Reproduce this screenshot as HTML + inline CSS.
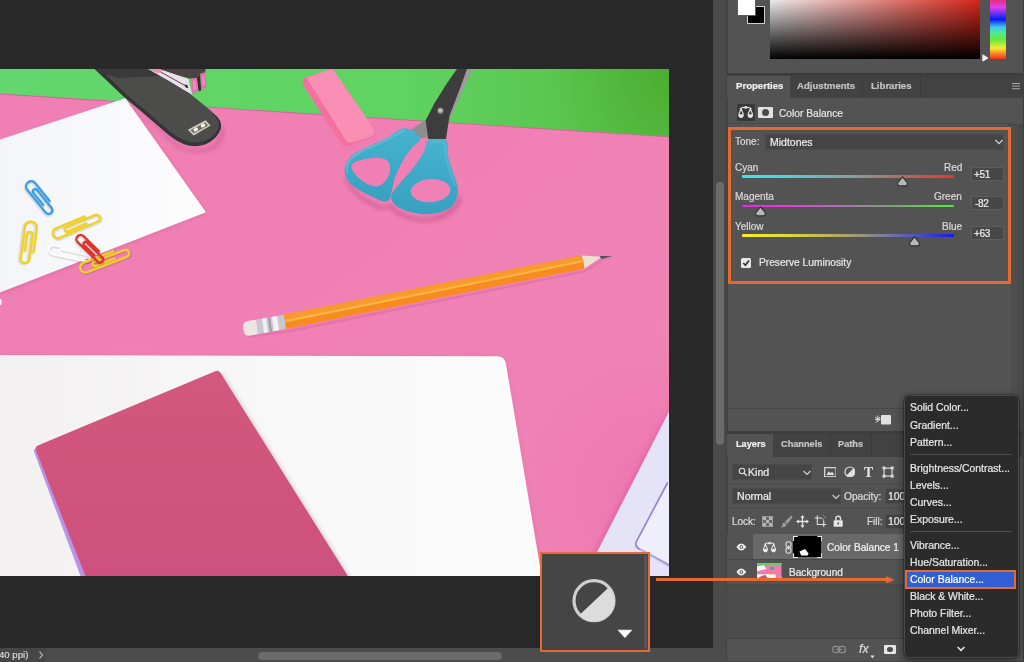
<!DOCTYPE html>
<html lang="en">
<head>
<meta charset="utf-8">
<title>Color Balance</title>
<style>
*{box-sizing:border-box;margin:0;padding:0}
html,body{width:1024px;height:662px;overflow:hidden;background:#282828}
body{position:relative;font-family:"Liberation Sans",sans-serif;font-size:10px;color:#dedede;-webkit-font-smoothing:antialiased;-webkit-text-stroke:.22px currentColor}
.abs{position:absolute}
.t{position:absolute;white-space:nowrap;line-height:12px;height:12px;will-change:transform}
.b{font-weight:700;font-size:9.6px}
/* canvas */
#photo{left:0;top:69px;width:669px;height:507px}
#status{left:0;top:648px;width:713px;height:14px;background:#4c4c4c}
#vtrack{left:713px;top:0;width:14px;height:648px;background:#4a4a4a}
/* right panel */
#panel{left:728px;top:0;width:297px;height:662px;background:#535353}
.dark{background:#424242}
.field{background:#454545;border:1px solid #4f4f4f;border-radius:1px}
.sl{position:absolute;left:742px;width:212px;height:2.6px;border-radius:1px}
.val{position:absolute;left:971px;width:33px;height:14px;background:#474747;border:1px solid #5d5d5d}
.mi{will-change:transform;position:absolute;left:909.6px;white-space:nowrap;line-height:12px;height:12px;color:#e6e6e6;font-size:10.4px}
</style>
</head>
<body>
<!-- PHOTO -->
<svg id="photo" class="abs" viewBox="0 69 669 507" preserveAspectRatio="none">
<defs>
<linearGradient id="gGreen" x1="0" y1="0" x2="1" y2="0"><stop offset="0" stop-color="#63d66f"/><stop offset=".6" stop-color="#60d362"/><stop offset="1" stop-color="#55bd40"/></linearGradient>
<linearGradient id="gPink" x1="0" y1="0" x2="1" y2="1"><stop offset="0" stop-color="#f07fb3"/><stop offset=".55" stop-color="#f081b5"/><stop offset="1" stop-color="#ef87b8"/></linearGradient>
<linearGradient id="gPaper" x1="0" y1="0" x2="1" y2="0"><stop offset="0" stop-color="#f4f5f8"/><stop offset="1" stop-color="#fdfdfe"/></linearGradient>
<linearGradient id="gNote" x1="0" y1="0" x2="1" y2="0"><stop offset="0" stop-color="#f2f0f0"/><stop offset=".5" stop-color="#f9f8f8"/><stop offset="1" stop-color="#fcfbfb"/></linearGradient>
<linearGradient id="gTeal" x1="0" y1="0" x2="0" y2="1"><stop offset="0" stop-color="#47b3cf"/><stop offset="1" stop-color="#37a1bf"/></linearGradient>
<filter id="blur1" x="-20%" y="-20%" width="140%" height="140%"><feGaussianBlur stdDeviation="2.2"/></filter>
<filter id="blur05" x="-20%" y="-20%" width="140%" height="140%"><feGaussianBlur stdDeviation="0.5"/></filter>
<linearGradient id="gBook" x1="0" y1="0" x2="0" y2="1"><stop offset="0" stop-color="#d3587f"/><stop offset="1" stop-color="#cd517c"/></linearGradient>
</defs>
<rect x="0" y="69" width="669" height="507" fill="url(#gPink)"/>
<radialGradient id="gShade" gradientUnits="userSpaceOnUse" cx="660" cy="500" r="170"><stop offset="0" stop-color="#e9579f" stop-opacity=".34"/><stop offset="1" stop-color="#e9579f" stop-opacity="0"/></radialGradient>
<rect x="480" y="320" width="189" height="256" fill="url(#gShade)"/>
<polygon points="0,69 669,69 669,137.2 0,94.4" fill="#b0507a" opacity=".55"/>
<polygon points="0,69 669,69 669,136.4 0,93.6" fill="url(#gGreen)"/>
<radialGradient id="gCorner" gradientUnits="userSpaceOnUse" cx="669" cy="69" r="120"><stop offset="0" stop-color="#3f9a20" stop-opacity=".45"/><stop offset="1" stop-color="#3f9a20" stop-opacity="0"/></radialGradient>
<polygon points="520,69 669,69 669,135.8 520,126.3" fill="url(#gCorner)"/>
<polygon points="0,142 126,100 207,213 0,295" fill="#c05088" opacity=".35" filter="url(#blur1)"/>
<polygon points="0,139.4 125.3,98.3 206,212.3 0,292.6" fill="url(#gPaper)"/>
<path d="M123,98 L181,146 Q200,154 214,144 Q224,134 220,122 L224,128 Q226,142 212,150 Q196,156 178,148 Z" fill="#a03a70" opacity=".35" filter="url(#blur1)"/>
<polygon points="159,69 205.8,69 204.9,72.8 200.3,73.7 196.8,78.1 190.6,78.7 177.5,75.2" fill="#4b4246"/>
<polygon points="150.5,69 159,69 177.5,75.2 188.4,78.9 192,94.4 186.2,91.6 156,75" fill="#e4e2ea"/>
<polygon points="150.5,69 159,69 163,70.4 157.4,73.4 153,71" fill="#f08cb4"/>
<path d="M160.6,72 L186.6,86.4" stroke="#8a2f4c" stroke-width="1" fill="none"/>
<polygon points="184.6,84.6 187.4,85 188.4,88.2 185.6,87.4" fill="#3a3034"/>
<polygon points="196.8,78.1 200.3,73.7 201.2,90.4 198.5,91.2" fill="#3a2c32"/>
<polygon points="190.6,78.5 196.8,78.1 198.5,91.2 192.4,93.9" fill="#e272aa"/>
<polygon points="200.3,73.7 205.6,71.9 206.5,86.8 201.2,90.4" fill="#e070a8"/>
<polygon points="192.6,81 195.6,80.6 196.4,89.6 193.6,90.8" fill="#ee94c0" opacity=".8"/>
<polygon points="202,76 204.4,75 205,85 202.6,86.6" fill="#ee94c0" opacity=".8"/>
<path d="M94.5,69 L123.5,96.5 L142.5,112.5 L167.5,134 Q176,141 184,144.2 Q194,148 205,144.6 Q217,139.5 220.8,129 Q222,122 217.5,117 L209.7,110 L189.4,93.6 L167.5,80.3 L147.2,69 Z" fill="#353535"/>
<path d="M100,69 L127,95 L146,111 L170,131.5 Q178,138 186,141 Q195,144 204.5,141 Q215,136.5 218.5,128 Q220,121.5 216,117.4 L209.7,110 L189.4,93.6 L167.5,80.3 L147.2,69 Z" fill="#4c4c4a"/>
<polygon points="95,69 147,69 160,76 118,78 104,74" fill="#3a3a3a"/>
<polygon points="187.8,129.8 205.6,120.2 210.6,125.6 193.6,135.4" fill="#cfccbd"/>
<polygon points="190.5,130.2 205.2,122.4 208,125.4 193.8,133.2" fill="#6a6960"/>
<ellipse cx="195.8" cy="129.6" rx="2.4" ry="1.7" fill="#f4f4f0" transform="rotate(-28 195.8 129.6)"/>
<ellipse cx="203" cy="125.6" rx="2.4" ry="1.7" fill="#f4f4f0" transform="rotate(-28 203 125.6)"/>
<path d="M304,88 L347,149 L374,139 L376,131 L372,140 L346,148 Z" fill="#b03a78" opacity=".4" filter="url(#blur1)"/>
<path d="M302.6,81 Q302.4,78.6 305,77.6 L329,69.9 Q333,69 335,72 L372.3,126.5 Q375,131 373.4,135 Q372.6,137.6 370,138.5 L349,145.6 Q343.6,147 341,143.4 L303.2,85.6 Z" fill="#f2719f"/>
<path d="M306.4,77.4 L329,69.9 Q333,69 335,72 L372.3,126.5 Q375,131 373.4,134 Q372.6,136 370,136.9 L352,142.6 Q348,143.4 346,140.4 Z" fill="#f98fb4"/>
<path d="M346,172 Q348,192 382,206 L392,204 Q400,216 426,218 Q452,214 460,194 L462,200 Q452,222 424,222 Q398,220 390,208 L380,210 Q348,196 344,176 Z" fill="#a83a78" opacity=".4" filter="url(#blur1)"/>
<polygon points="465,69 472.6,69 458,101 451,117 448,117" fill="#9c9c9c"/>
<polygon points="410.6,129.9 425.5,119.7 428,137.4 420.5,138.3" fill="#8e8e8e"/>
<path d="M457,69 L467,69 L459.6,89.5 L449.6,115.6 L446,139 L428.2,139 L425.6,120.4 L434.3,103.5 L446.3,84.2 Z" fill="#3d3d3d"/>
<circle cx="440.4" cy="110.8" r="3.6" fill="#5e5e5e"/><circle cx="440.4" cy="110.6" r="2.4" fill="#bdbdbd"/>
<path fill-rule="evenodd" fill="url(#gTeal)" d="M404.8,128.3 C398.8,128.4 391.5,135.8 384.8,139.1 C378.2,142.4 370.4,145.4 364.9,148.2 C359.4,151.0 354.8,152.9 351.6,155.7 C348.4,158.5 346.9,161.9 345.8,164.8 C344.7,167.7 344.4,170.2 345.0,173.1 C345.5,176.0 346.6,179.4 349.1,182.3 C351.6,185.2 355.9,188.1 359.9,190.6 C363.9,193.1 369.3,195.4 373.2,197.2 C377.1,199.0 380.5,200.9 383.2,201.4 C385.8,201.8 387.6,201.1 389.0,199.7 C390.4,198.3 390.5,196.7 391.5,193.1 C392.4,189.5 393.1,183.1 394.8,178.1 C396.5,173.1 398.7,168.1 401.4,163.2 C404.2,158.2 408.2,152.4 411.4,148.2 C414.6,144.1 421.6,141.6 420.5,138.3 C419.4,134.9 410.7,128.1 404.8,128.3 Z M351.6,164.8 C352.3,162.7 354.9,161.8 358.3,160.7 C361.6,159.5 367.4,158.2 371.5,157.9 C375.7,157.5 380.3,157.6 383.2,158.5 C386.1,159.4 387.9,161.0 389.0,163.2 C390.1,165.3 390.2,168.7 389.8,171.5 C389.4,174.2 388.1,177.4 386.5,179.8 C384.8,182.1 382.1,184.5 379.8,185.6 C377.6,186.6 376.0,186.8 373.2,186.1 C370.4,185.4 366.4,183.6 363.2,181.4 C360.1,179.3 356.0,175.9 354.1,173.1 C352.2,170.4 350.9,166.9 351.6,164.8 Z"/>
<path fill="url(#gTeal)" d="M428.0,139.9 C431.2,139.8 443.0,138.3 446.3,140.7 C449.6,143.2 447.0,150.0 447.9,154.9 C448.9,159.7 450.6,164.8 452.1,169.8 C453.6,174.8 456.2,180.6 457.1,184.8 C458.0,188.9 458.3,191.4 457.6,194.7 C456.9,198.0 455.4,201.9 452.9,204.7 C450.5,207.5 447.1,209.7 443.0,211.3 C438.8,212.9 433.3,214.2 428.0,214.3 C422.7,214.5 416.4,213.4 411.4,212.2 C406.4,211.0 401.4,209.1 398.1,207.2 C394.8,205.2 392.8,202.9 391.8,200.5 C390.8,198.2 390.7,196.2 392.3,193.1 C393.9,189.9 398.0,185.6 401.4,181.4 C404.9,177.3 409.5,172.9 413.1,168.1 C416.7,163.4 420.7,157.6 423.0,153.2 C425.4,148.8 426.3,143.8 427.2,141.6 C428.0,139.4 424.8,140.1 428.0,139.9 Z"/>
<ellipse cx="430.5" cy="190.6" rx="19.9" ry="11.6" fill="#f081b5" transform="rotate(-4 430.5 190.6)"/>
<path d="M403.9,130.3 C400.7,132.0 391.2,137.5 384.8,140.7 C378.5,144.0 371.0,146.9 365.7,149.5 C360.4,152.2 356.0,154.3 352.9,156.9 C349.9,159.4 348.6,162.3 347.6,164.8 C346.6,167.4 347.1,171.1 347.0,172.3 " fill="none" stroke="#5fc0d8" stroke-width="2.2" stroke-linecap="round" opacity=".75"/>
<path d="M430.5,142.4 C432.7,142.5 441.2,140.7 443.8,142.9 C446.4,145.1 444.9,151.1 445.9,155.7 C447.0,160.3 448.5,165.8 449.9,170.6 C451.4,175.5 453.8,182.4 454.6,184.8 " fill="none" stroke="#5bbcd4" stroke-width="2" stroke-linecap="round" opacity=".6"/>
<g transform="translate(40.2 197.5) rotate(51.0)"><path d="M8.6,-5.2 L-14.2,-5.2 A5.2,5.2 0 0 0 -14.2,5.2 L15.7,5.2 A3.8,3.8 0 0 0 15.7,-2.3 L-7.8,-2.3 A2.3,2.3 0 0 0 -7.8,2.4 L7.8,2.4" fill="none" stroke="#000" stroke-opacity=".10" stroke-width="3.5999999999999996" stroke-linecap="round" transform="translate(0.8 1.2)"/><path d="M8.6,-5.2 L-14.2,-5.2 A5.2,5.2 0 0 0 -14.2,5.2 L15.7,5.2 A3.8,3.8 0 0 0 15.7,-2.3 L-7.8,-2.3 A2.3,2.3 0 0 0 -7.8,2.4 L7.8,2.4" fill="none" stroke="#3b9ee6" stroke-width="2.4" stroke-linecap="round"/></g>
<g transform="translate(29.0 242.5) rotate(97.5)"><path d="M9.2,-6.0 L-15.0,-6.0 A6.0,6.0 0 0 0 -15.0,6.0 L16.7,6.0 A4.3,4.3 0 0 0 16.7,-2.6 L-8.4,-2.6 A2.7,2.7 0 0 0 -8.4,2.7 L8.4,2.7" fill="none" stroke="#000" stroke-opacity=".10" stroke-width="3.5999999999999996" stroke-linecap="round" transform="translate(0.8 1.2)"/><path d="M9.2,-6.0 L-15.0,-6.0 A6.0,6.0 0 0 0 -15.0,6.0 L16.7,6.0 A4.3,4.3 0 0 0 16.7,-2.6 L-8.4,-2.6 A2.7,2.7 0 0 0 -8.4,2.7 L8.4,2.7" fill="none" stroke="#f3d21f" stroke-width="2.4" stroke-linecap="round"/></g>
<g transform="translate(76.0 225.5) rotate(-23.0)"><path d="M11.0,-5.0 L-20.0,-5.0 A5.0,5.0 0 0 0 -20.0,5.0 L21.4,5.0 A3.6,3.6 0 0 0 21.4,-2.2 L-10.0,-2.2 A2.2,2.2 0 0 0 -10.0,2.3 L10.0,2.3" fill="none" stroke="#000" stroke-opacity=".10" stroke-width="3.5999999999999996" stroke-linecap="round" transform="translate(0.8 1.2)"/><path d="M11.0,-5.0 L-20.0,-5.0 A5.0,5.0 0 0 0 -20.0,5.0 L21.4,5.0 A3.6,3.6 0 0 0 21.4,-2.2 L-10.0,-2.2 A2.2,2.2 0 0 0 -10.0,2.3 L10.0,2.3" fill="none" stroke="#f0d125" stroke-width="2.4" stroke-linecap="round"/></g>
<g transform="translate(69.5 253.0) rotate(12.0)"><path d="M9.2,-4.5 L-16.5,-4.5 A4.5,4.5 0 0 0 -16.5,4.5 L17.8,4.5 A3.2,3.2 0 0 0 17.8,-2.0 L-8.4,-2.0 A2.0,2.0 0 0 0 -8.4,2.0 L8.4,2.0" fill="none" stroke="#000" stroke-opacity=".10" stroke-width="3.5999999999999996" stroke-linecap="round" transform="translate(0.8 1.2)"/><path d="M9.2,-4.5 L-16.5,-4.5 A4.5,4.5 0 0 0 -16.5,4.5 L17.8,4.5 A3.2,3.2 0 0 0 17.8,-2.0 L-8.4,-2.0 A2.0,2.0 0 0 0 -8.4,2.0 L8.4,2.0" fill="none" stroke="#fbfbfd" stroke-width="2.4" stroke-linecap="round"/></g>
<g transform="translate(104.5 260.0) rotate(-21.0)"><path d="M11.2,-5.0 L-20.5,-5.0 A5.0,5.0 0 0 0 -20.5,5.0 L21.9,5.0 A3.6,3.6 0 0 0 21.9,-2.2 L-10.2,-2.2 A2.2,2.2 0 0 0 -10.2,2.3 L10.2,2.3" fill="none" stroke="#000" stroke-opacity=".10" stroke-width="3.5999999999999996" stroke-linecap="round" transform="translate(0.8 1.2)"/><path d="M11.2,-5.0 L-20.5,-5.0 A5.0,5.0 0 0 0 -20.5,5.0 L21.9,5.0 A3.6,3.6 0 0 0 21.9,-2.2 L-10.2,-2.2 A2.2,2.2 0 0 0 -10.2,2.3 L10.2,2.3" fill="none" stroke="#f2cf25" stroke-width="2.4" stroke-linecap="round"/></g>
<g transform="translate(90.5 248.8) rotate(44.0)"><path d="M7.9,-4.2 L-13.8,-4.2 A4.2,4.2 0 0 0 -13.8,4.2 L14.9,4.2 A3.1,3.1 0 0 0 14.9,-1.9 L-7.2,-1.9 A1.9,1.9 0 0 0 -7.2,1.9 L7.2,1.9" fill="none" stroke="#000" stroke-opacity=".10" stroke-width="3.5999999999999996" stroke-linecap="round" transform="translate(0.8 1.2)"/><path d="M7.9,-4.2 L-13.8,-4.2 A4.2,4.2 0 0 0 -13.8,4.2 L14.9,4.2 A3.1,3.1 0 0 0 14.9,-1.9 L-7.2,-1.9 A1.9,1.9 0 0 0 -7.2,1.9 L7.2,1.9" fill="none" stroke="#e0352f" stroke-width="2.4" stroke-linecap="round"/></g>
<g transform="translate(0 .7)">
<polygon points="246,334.5 286,329.6 585,269.2 603,257.6 612.6,256.2 603,260 586,271.6 287,332.4 250,337" fill="#c04888" opacity=".22" filter="url(#blur05)"/>
<polygon points="283.9,314 581.5,254.8 584.5,267.7 286,328.1" fill="#f68b1f"/>
<polygon points="283.9,314 581.5,254.8 582.6,259.4 284.7,319.4" fill="#f89a2c"/>
<polygon points="284.7,319.4 582.6,259.4 583.1,261.6 285,321.8" fill="#fcb447"/>
<polygon points="581.5,254.8 602,256.1 584.5,267.7 583.6,261" fill="#eedfce"/>
<polygon points="599.5,255.2 612.6,255.4 601.4,258.2" fill="#53525a"/>
<polygon points="256.2,318.9 283.9,314 286,328.1 257.8,333.6" fill="#c9c8d2"/>
<polygon points="262,318 266,317.3 268,331.6 264,332.4" fill="#eeeef4"/><polygon points="272,316.2 277,315.3 279,329.5 274,330.4" fill="#f2f2f7"/><polygon points="268,317 270,316.6 272,330.8 270,331.2" fill="#9a99a6"/>
<path d="M256.2,318.9 L257.8,333.6 L249,335 Q244.6,335.4 243.6,330 L243.2,326 Q243,321.4 247.4,320.4 Z" fill="#ece5e3"/>
</g>
<path d="M0,354 L498,355.4 Q506,356 508,364 L544,576 L0,576 Z" fill="#b8407c" opacity=".12" filter="url(#blur1)"/>
<path d="M0,355 L497.5,356.3 Q504.4,356.6 505.8,363 L541.6,576 L0,576 Z" fill="url(#gNote)"/>
<path d="M38,451 L85,580 L352,580 L222,373 Z" fill="#8a8086" opacity=".35" filter="url(#blur1)"/>
<path d="M33.6,450.4 L80.6,576 L89,576 L38,446.4 Z" fill="#b893e6"/>
<path d="M214.6,371.4 Q218.4,369.6 220.6,373 L347.8,576 L85.4,576 L35.8,450 Q34.6,446.8 37.8,445.4 Z" fill="url(#gBook)"/>
<polygon points="669,406 669,576 580,576" fill="#d8509a" opacity=".35" filter="url(#blur1)"/>
<polygon points="669,411.6 669,576 584.8,576" fill="#e4e3f7"/>
<path d="M669,480 L667,483.6 L636.4,541.6 Q634.6,546 638.6,548.4 L669,565 Z" fill="#efeefb"/>
<path d="M667.4,483 L636.4,541.6 Q634.6,546 638.6,548.4 L669,565" fill="none" stroke="#9089cf" stroke-width="1.7" stroke-linecap="round"/>
<path d="M640,549.6 L669,566.6" fill="none" stroke="#c4c0ea" stroke-width="1.6"/>
<ellipse cx="0" cy="302" rx="1.6" ry="3.2" fill="#f6f4f6"/>
</svg>

<!-- status bar + scroll track -->
<div id="status" class="abs"></div>
<div class="abs" style="left:0;top:648px;width:46px;height:14px;background:#464646"></div>
<div class="t" style="left:-1px;top:649px;color:#d6d6d6;font-size:9.6px">40 ppi)</div>
<svg class="abs" style="left:37px;top:650px" width="8" height="10" viewBox="0 0 8 10"><path d="M2.5 1.5 L5.5 5 L2.5 8.5" fill="none" stroke="#c8c8c8" stroke-width="1.1"/></svg>
<div class="abs" style="left:258px;top:651.5px;width:244px;height:8px;border-radius:4px;background:#6b6b6b"></div>
<div id="vtrack" class="abs"></div>
<div class="abs" style="left:715.5px;top:182px;width:8px;height:263px;border-radius:4px;background:#6b6b6b"></div>
<div class="abs" style="left:713px;top:648px;width:14px;height:14px;background:#4c4c4c"></div>
<div class="abs" style="left:726px;top:0;width:2.3px;height:662px;background:#434343"></div>

<!-- RIGHT PANEL -->
<div id="panel" class="abs"></div>
<div class="abs" style="left:1011px;top:126px;width:13px;height:305px;background:#4e4e4e"></div><div class="abs" style="left:1016.5px;top:126px;width:7.5px;height:305px;background:#4a4a4a"></div><div class="abs" style="left:1008px;top:124.2px;width:16px;height:1.6px;background:#474747"></div><div class="abs" style="left:1023.3px;top:0;width:.7px;height:662px;background:#3c3c3c"></div>
<!-- color panel -->
<div class="abs" style="left:746.5px;top:6px;width:18px;height:18px;background:#000;border:1px solid #cfcfcf"></div>
<div class="abs" style="left:737px;top:-3px;width:18.5px;height:18.5px;background:#fff;border:1px solid #5a5a5a"></div>
<div class="abs" style="left:770px;top:0;width:210px;height:58.5px;background:linear-gradient(to bottom,rgba(0,0,0,.08) 0,rgba(0,0,0,1) 100%),linear-gradient(to right,#fff 0,#e8281c 100%)"></div>
<div class="abs" style="left:989.5px;top:0;width:16px;height:58.5px;background:linear-gradient(to bottom,#e0307a 0,#e83cf0 12%,#3a2cf0 27%,#0a18f0 33%,#40c8f0 46%,#50e890 56%,#60e840 66%,#b8ec38 76%,#f8e838 82%,#f89028 90%,#f03020 100%)"></div>
<svg class="abs" style="left:981.5px;top:54px" width="7" height="8" viewBox="0 0 7 8"><path d="M.8 .8 L6 4 L.8 7.2 Z" fill="#f2f2f2" stroke="#f2f2f2" stroke-width=".8" stroke-linejoin="round"/></svg>
<!-- divider + tabs -->
<div class="abs" style="left:727px;top:73px;width:297px;height:3px;background:#3d3d3d"></div>
<div class="abs dark" style="left:727px;top:76px;width:297px;height:22px"></div>
<div class="abs" style="left:727px;top:76px;width:63px;height:22px;background:#535353"></div>
<div class="abs" style="left:862px;top:76px;width:1px;height:22px;background:#3a3a3a"></div>
<div class="abs" style="left:920px;top:76px;width:1px;height:22px;background:#3a3a3a"></div>
<div class="t b" style="left:735.5px;top:79.8px;color:#f0f0f0">Properties</div>
<div class="t b" style="left:796.6px;top:79.8px;color:#c4c4c4">Adjustments</div>
<div class="t b" style="left:871px;top:79.8px;color:#c4c4c4">Libraries</div>
<div class="abs" style="left:1011.5px;top:83px;width:8px;height:1.4px;background:#a8a8a8;box-shadow:0 2.6px 0 #a8a8a8,0 5.2px 0 #a8a8a8"></div>
<!-- properties header -->
<div class="abs" style="left:737px;top:103.5px;width:18px;height:17px;background:#383838;border-radius:1px"></div>
<svg class="abs" style="left:737.4px;top:104.8px" width="17.4" height="15" viewBox="0 0 16 14"><g fill="none" stroke="#e4e4e4" stroke-width="1.1"><path d="M2.6 3.6 Q5.5 1.6 8 2.6 Q10.5 1.6 13.4 3.6"/><path d="M3.6 3.4 L1.6 8.6 M3.6 3.4 L5.8 8.6 M12.4 3.4 L10.2 8.6 M12.4 3.4 L14.4 8.6"/></g><circle cx="8" cy="2.3" r="1.3" fill="#e4e4e4"/><path d="M.9 8.6 H6.4 Q6 12.2 3.65 12.2 Q1.3 12.2 .9 8.6Z M9.6 8.6 H15.1 Q14.7 12.2 12.35 12.2 Q10 12.2 9.6 8.6Z" fill="#e4e4e4"/></svg>
<div class="abs" style="left:758px;top:106.8px;width:15.2px;height:11.4px;background:#e2e2e2;border-radius:1px"></div>
<div class="abs" style="left:762.1px;top:109px;width:7px;height:7px;border-radius:50%;background:#4a4a4a"></div>
<div class="t" style="left:779px;top:107.8px;font-size:10.2px;color:#e2e2e2">Color Balance</div>
<div class="abs" style="left:727px;top:123px;width:285px;height:1px;background:#4a4a4a"></div>
<!-- orange highlight -->
<div class="abs" style="left:728px;top:127px;width:283px;height:157px;border:3px solid #e8692f"></div>
<!-- tone row -->
<div class="t" style="left:735px;top:135.5px;color:#d8d8d8">Tone:</div>
<div class="abs" style="left:764.5px;top:133.5px;width:239.5px;height:16px;background:#454545;border:1px solid #4c4c4c"></div>
<div class="t" style="left:769.7px;top:135.5px;font-size:10.5px;color:#ececec">Midtones</div>
<svg class="abs" style="left:994px;top:138px" width="10" height="8" viewBox="0 0 10 8"><path d="M1.4 2 L5 5.6 L8.6 2" fill="none" stroke="#d4d4d4" stroke-width="1.2"/></svg>
<!-- sliders -->
<div class="t" style="left:734.5px;top:161.7px;color:#d8d8d8">Cyan</div>
<div class="t" style="right:62px;top:161.7px;color:#d8d8d8">Red</div>
<div class="sl" style="top:175px;background:linear-gradient(to right,#38e6ec 0,#48d8e0 18%,#8a9a9a 55%,#b07068 72%,#e83828 100%)"></div>
<div class="val" style="top:166.5px"></div><div class="t" style="left:974px;top:168.7px;font-size:10px;letter-spacing:-.35px;color:#ececec">+51</div>
<div class="t" style="left:734.5px;top:191.2px;color:#d8d8d8">Magenta</div>
<div class="t" style="right:62px;top:191.2px;color:#d8d8d8">Green</div>
<div class="sl" style="top:204.7px;background:linear-gradient(to right,#f020f4 0,#e838e8 20%,#a878a8 50%,#80a078 70%,#50f038 100%)"></div>
<div class="val" style="top:196px"></div><div class="t" style="left:975px;top:198.2px;font-size:10px;letter-spacing:-.35px;color:#ececec">-82</div>
<div class="t" style="left:734.5px;top:220.7px;color:#d8d8d8">Yellow</div>
<div class="t" style="right:62px;top:220.7px;color:#d8d8d8">Blue</div>
<div class="sl" style="top:234.3px;background:linear-gradient(to right,#f4f020 0,#e0dc38 20%,#a8a468 50%,#7070a8 72%,#1818f0 100%)"></div>
<div class="val" style="top:225.5px"></div><div class="t" style="left:974px;top:227.7px;font-size:10px;letter-spacing:-.35px;color:#ececec">+63</div>
<svg class="abs" style="left:895.7px;top:176.3px" width="13" height="11" viewBox="0 0 13 11"><path d="M6.5 .9 L11.2 6.6 Q11.8 9.9 8.8 9.9 H4.2 Q1.2 9.9 1.8 6.6 Z" fill="#b9b9b9" stroke="#2e2e2e" stroke-width="1.1" stroke-linejoin="round"/></svg>
<svg class="abs" style="left:754.1px;top:206.0px" width="13" height="11" viewBox="0 0 13 11"><path d="M6.5 .9 L11.2 6.6 Q11.8 9.9 8.8 9.9 H4.2 Q1.2 9.9 1.8 6.6 Z" fill="#b9b9b9" stroke="#2e2e2e" stroke-width="1.1" stroke-linejoin="round"/></svg>
<svg class="abs" style="left:908.3px;top:235.6px" width="13" height="11" viewBox="0 0 13 11"><path d="M6.5 .9 L11.2 6.6 Q11.8 9.9 8.8 9.9 H4.2 Q1.2 9.9 1.8 6.6 Z" fill="#b9b9b9" stroke="#2e2e2e" stroke-width="1.1" stroke-linejoin="round"/></svg>
<!-- checkbox -->
<div class="abs" style="left:740.7px;top:257.7px;width:10.2px;height:10px;background:#e6e6e6;border-radius:1.5px"></div>
<svg class="abs" style="left:740.7px;top:257.7px" width="10.2" height="10" viewBox="0 0 10 10"><path d="M2.2 5 L4.3 7.2 L7.9 2.6" fill="none" stroke="#2c2c2c" stroke-width="1.6"/></svg>
<div class="t" style="left:758.6px;top:257.4px;font-size:10.2px;color:#e6e6e6">Preserve Luminosity</div>
<!-- properties bottom bar -->
<div class="abs" style="left:727px;top:408px;width:285px;height:1px;background:#474747"></div>
<svg class="abs" style="left:873.5px;top:414px" width="18" height="12" viewBox="0 0 18 12"><rect x="7" y="1" width="10" height="9.6" rx=".8" fill="#e0e0e0"/><path d="M1.2 3 L5.6 6.4 M3.8 1.6 L3.8 7.6 M1 5.4 L6.6 5.4 M2 8.6 L6 3" stroke="#e0e0e0" stroke-width="1" fill="none"/></svg>
<div class="abs" style="left:727px;top:431px;width:297px;height:2.5px;background:#3d3d3d"></div>
<!-- layers tabs -->
<div class="abs dark" style="left:727px;top:433.5px;width:297px;height:23px"></div>
<div class="abs" style="left:727px;top:433.5px;width:46px;height:23px;background:#535353"></div>
<div class="abs" style="left:829.5px;top:433.5px;width:1px;height:23px;background:#3a3a3a"></div>
<div class="abs" style="left:871px;top:433.5px;width:1px;height:23px;background:#3a3a3a"></div>
<div class="t b" style="left:736px;top:438.1px;font-size:9.2px;color:#f0f0f0">Layers</div>
<div class="t b" style="left:780.6px;top:438.1px;font-size:9.2px;color:#c4c4c4">Channels</div>
<div class="t b" style="left:838.3px;top:438.1px;font-size:9.2px;color:#c4c4c4">Paths</div>
<!-- kind row -->
<div class="abs" style="left:732px;top:464.3px;width:80px;height:15.5px;background:#454545;border:1px solid #4b4b4b"></div>
<svg class="abs" style="left:738px;top:467px" width="10" height="10" viewBox="0 0 10 10"><circle cx="4" cy="4" r="2.7" fill="none" stroke="#dcdcdc" stroke-width="1.1"/><path d="M6 6 L8.8 8.8" stroke="#dcdcdc" stroke-width="1.4"/></svg>
<div class="t" style="left:748.2px;top:466px;font-size:10.6px;color:#ececec">Kind</div>
<svg class="abs" style="left:801.5px;top:468.5px" width="10" height="8" viewBox="0 0 10 8"><path d="M1.6 2 L5 5.4 L8.4 2" fill="none" stroke="#d4d4d4" stroke-width="1.2"/></svg>
<svg class="abs" style="left:823.5px;top:466.6px" width="12.8" height="10.4" viewBox="0 0 13 11" preserveAspectRatio="none"><rect x=".7" y=".7" width="11.6" height="9.6" fill="none" stroke="#e0e0e0" stroke-width="1.2"/><path d="M2.4 8.4 L5 4.6 L6.6 6.6 L8.2 5 L10.6 8.4 Z" fill="#e0e0e0"/></svg>
<svg class="abs" style="left:843.6px;top:465.7px" width="11.8" height="11.8" viewBox="0 0 12 12"><circle cx="6" cy="6" r="5" fill="none" stroke="#e0e0e0" stroke-width="1.2"/><path d="M9.55 2.45 A5 5 0 0 1 2.45 9.55 Z" fill="#e0e0e0"/></svg>
<div class="t" style="left:864px;top:465.5px;font-family:'Liberation Serif',serif;font-weight:700;font-size:13.6px;line-height:14px;height:14px;color:#e0e0e0">T</div>
<svg class="abs" style="left:881.8px;top:466px" width="12.2" height="12.2" viewBox="0 0 13 13"><rect x="2.3" y="2.3" width="8.4" height="8.4" fill="none" stroke="#e0e0e0" stroke-width="1.2"/><g fill="#e0e0e0"><rect x=".6" y=".6" width="3" height="3"/><rect x="9.4" y=".6" width="3" height="3"/><rect x=".6" y="9.4" width="3" height="3"/><rect x="9.4" y="9.4" width="3" height="3"/></g></svg>
<div class="abs" style="left:727px;top:482.5px;width:285px;height:1px;background:#4a4a4a"></div>
<!-- normal row -->
<div class="abs" style="left:732px;top:488.4px;width:108.5px;height:15.6px;background:#454545;border:1px solid #4b4b4b"></div>
<div class="t" style="left:736.7px;top:490.4px;font-size:10.6px;color:#ececec">Normal</div>
<svg class="abs" style="left:830.5px;top:493px" width="10" height="8" viewBox="0 0 10 8"><path d="M1.6 2 L5 5.4 L8.4 2" fill="none" stroke="#d4d4d4" stroke-width="1.2"/></svg>
<div class="t" style="left:844px;top:490.6px;font-size:10.2px;color:#dcdcdc">Opacity:</div>
<div class="abs" style="left:884.5px;top:488.4px;width:40px;height:15.6px;background:#434343;border:1px solid #4e4e4e"></div>
<div class="t" style="left:887.5px;top:490.6px;font-size:10.4px;color:#ececec">100%</div>
<div class="abs" style="left:727px;top:508px;width:285px;height:1px;background:#4a4a4a"></div>
<!-- lock row -->
<div class="t" style="left:732.4px;top:515.9px;color:#dcdcdc">Lock:</div>
<svg class="abs" style="left:761.5px;top:515.5px" width="11" height="11" viewBox="0 0 11 11"><rect x=".5" y=".5" width="10" height="10" fill="#6a6a6a" stroke="#9c9c9c" stroke-width="1"/><g fill="#b4b4b4"><rect x="1" y="1" width="3" height="3"/><rect x="7" y="1" width="3" height="3"/><rect x="4" y="4" width="3" height="3"/><rect x="1" y="7" width="3" height="3"/><rect x="7" y="7" width="3" height="3"/></g></svg>
<svg class="abs" style="left:779.5px;top:514.5px" width="13" height="13" viewBox="0 0 13 13"><path d="M11.4 .4 Q13 1 12.2 2.8 L7.4 9 L4.8 6.8 Z" fill="#9c9c9c"/><path d="M4.2 7.4 L6.8 9.6 Q5.6 12.4 .8 12.8 Q2.6 10.8 2.4 9.4 Q2.8 7.6 4.2 7.4 Z" fill="#9c9c9c"/></svg>
<svg class="abs" style="left:795.5px;top:514.5px" width="13" height="13" viewBox="0 0 13 13"><path d="M6.5 1.2 V11.8 M1.2 6.5 H11.8" stroke="#e2e2e2" stroke-width="1.3" fill="none"/><path d="M6.5 0 L8.6 2.8 H4.4 Z M6.5 13 L8.6 10.2 H4.4 Z M0 6.5 L2.8 4.4 V8.6 Z M13 6.5 L10.2 4.4 V8.6 Z" fill="#e2e2e2"/></svg>
<svg class="abs" style="left:814px;top:514.8px" width="13" height="12.6" viewBox="0 0 14 14"><path d="M3.4 .6 V10.6 H13.4 M.6 3.4 H8 M10.6 13.4 V6" stroke="#e2e2e2" stroke-width="1.2" fill="none"/><path d="M8.2 3.4 L10.6 5.8" stroke="#e2e2e2" stroke-width="1.2" stroke-dasharray="1.4 1"/><path d="M10.4 .8 L13.2 3.6" stroke="#e2e2e2" stroke-width="1" stroke-dasharray="1.2 1"/></svg>
<svg class="abs" style="left:833.4px;top:514.8px" width="10.4" height="12" viewBox="0 0 11 13"><path d="M3 6 V3.8 Q3 1.2 5.5 1.2 Q8 1.2 8 3.8 V6" fill="none" stroke="#e6e6e6" stroke-width="1.5"/><rect x=".6" y="5.6" width="9.8" height="7" rx=".8" fill="#e6e6e6"/><rect x="4.7" y="8" width="1.6" height="2.4" fill="#555"/></svg>
<div class="t" style="left:866.7px;top:515.9px;color:#dcdcdc">Fill:</div>
<div class="abs" style="left:884.5px;top:513.6px;width:40px;height:15.4px;background:#434343;border:1px solid #4e4e4e"></div>
<div class="t" style="left:887.5px;top:516.4px;font-size:10.4px;color:#ececec">100%</div>
<!-- layer rows -->
<div class="abs" style="left:727px;top:534.3px;width:285px;height:104px;background:#4c4c4c"></div>
<div class="abs" style="left:727px;top:534.3px;width:26px;height:49.5px;background:#535353"></div>
<div class="abs" style="left:753px;top:534.3px;width:259px;height:24.7px;background:#696969"></div>
<div class="abs" style="left:753px;top:559.4px;width:259px;height:24.4px;background:#535353"></div>
<div class="abs" style="left:727px;top:559px;width:285px;height:.8px;background:#474747"></div>
<div class="abs" style="left:727px;top:583.6px;width:285px;height:.8px;background:#474747"></div>
<svg class="abs" style="left:735.6px;top:543px" width="10.6" height="8" viewBox="0 0 12 9"><path d="M.4 4.5 Q3 .6 6 .6 Q9 .6 11.6 4.5 Q9 8.4 6 8.4 Q3 8.4 .4 4.5Z" fill="#ededed"/><circle cx="6" cy="4.5" r="2.1" fill="#555"/><circle cx="6" cy="4.5" r="1" fill="#ededed"/></svg>
<svg class="abs" style="left:735.6px;top:568px" width="10.6" height="8" viewBox="0 0 12 9"><path d="M.4 4.5 Q3 .6 6 .6 Q9 .6 11.6 4.5 Q9 8.4 6 8.4 Q3 8.4 .4 4.5Z" fill="#ededed"/><circle cx="6" cy="4.5" r="2.1" fill="#555"/><circle cx="6" cy="4.5" r="1" fill="#ededed"/></svg>
<svg class="abs" style="left:761.5px;top:541px" width="15" height="13" viewBox="0 0 16 14"><g fill="none" stroke="#ececec" stroke-width="1.1"><path d="M2.6 3.6 Q5.5 1.6 8 2.6 Q10.5 1.6 13.4 3.6"/><path d="M3.6 3.4 L1.6 8.6 M3.6 3.4 L5.8 8.6 M12.4 3.4 L10.2 8.6 M12.4 3.4 L14.4 8.6"/></g><circle cx="8" cy="2.3" r="1.3" fill="#ececec"/><path d="M.9 8.6 H6.4 Q6 12.2 3.65 12.2 Q1.3 12.2 .9 8.6Z M9.6 8.6 H15.1 Q14.7 12.2 12.35 12.2 Q10 12.2 9.6 8.6Z" fill="#ececec"/></svg>
<svg class="abs" style="left:784.5px;top:541px" width="7" height="13" viewBox="0 0 7 13"><rect x="1" y=".8" width="5" height="5.6" rx="2.2" fill="none" stroke="#dedede" stroke-width="1.1"/><rect x="1" y="6.6" width="5" height="5.6" rx="2.2" fill="none" stroke="#dedede" stroke-width="1.1"/><path d="M3.5 4.4 V8.6" stroke="#dedede" stroke-width="1.1"/></svg>
<div class="abs" style="left:793px;top:536.3px;width:28.2px;height:21.2px;background:#000"></div>
<svg class="abs" style="left:792.5px;top:535.8px" width="29.2" height="22.2" viewBox="0 0 30 22.2" preserveAspectRatio="none"><path d="M.5 5 V.5 H5 M25 .5 H29.5 V5 M29.5 17.2 V21.7 H25 M5 21.7 H.5 V17.2" fill="none" stroke="#e8e8e8" stroke-width="1.2"/><path d="M6.6 15.6 L12.4 13 L16 17.6 L15 19.4 L8.4 19.4 Z" fill="#fff"/></svg>
<div class="t" style="left:827px;top:542.1px;font-size:10.1px;color:#f0f0f0">Color Balance 1</div>
<svg class="abs" style="left:757px;top:562.8px" width="24.5" height="18.6" viewBox="0 0 24.5 20" preserveAspectRatio="none"><rect width="24.5" height="20" fill="#f27bb0"/><rect width="24.5" height="2.2" fill="#5cd35f"/><polygon points="0,3.4 7,2.4 9.6,6.4 0,9" fill="#f6f6f8"/><polygon points="0,12 18.4,12 19.6,20 0,20" fill="#f6f4f4"/><polygon points="2,15.2 8.2,12.6 12.6,20 3.6,20" fill="#cb507e"/><polygon points="13,4.6 17,4.2 17,7 13.6,7.4" fill="#3ba0bc"/><polygon points="9,11 22,8.6 22,9.4 9,11.8" fill="#f68b1f"/><polygon points="24.5,14 24.5,20 21.6,20" fill="#e4e3f7"/></svg>
<div class="t" style="left:788.6px;top:566.9px;font-size:10.1px;color:#ececec">Background</div>
<!-- layers bottom bar -->
<div class="abs" style="left:727px;top:638px;width:285px;height:24px;background:#535353"></div>
<div class="abs" style="left:727px;top:637.6px;width:285px;height:.8px;background:#444"></div>
<div class="abs" style="left:727px;top:660.5px;width:297px;height:1.5px;background:#444"></div>
<svg class="abs" style="left:832px;top:644.5px" width="14" height="9" viewBox="0 0 14 9"><rect x=".7" y="1.4" width="6.6" height="6.2" rx="2.6" fill="none" stroke="#8e8e8e" stroke-width="1.3"/><rect x="6.7" y="1.4" width="6.6" height="6.2" rx="2.6" fill="none" stroke="#8e8e8e" stroke-width="1.3"/><path d="M4 4.5 H10" stroke="#8e8e8e" stroke-width="1.3"/></svg>
<div class="t" style="left:858.6px;top:642.4px;font-style:italic;font-size:12.4px;line-height:14px;height:14px;color:#dcdcdc">fx</div>
<svg class="abs" style="left:870px;top:654.5px" width="5" height="4" viewBox="0 0 5 4"><path d="M.4 .6 H4.6 L2.5 3.4Z" fill="#dcdcdc"/></svg>
<div class="abs" style="left:884.3px;top:644.6px;width:12.2px;height:9.4px;background:#e6e6e6;border-radius:1px"></div>
<div class="abs" style="left:887.4px;top:646.5px;width:5.8px;height:5.6px;border-radius:50%;background:#4c4c4c"></div>
<!-- adjustment menu -->
<div class="abs" style="left:903.5px;top:394.5px;width:115px;height:263px;background:#2b2b2b;border-radius:5.5px;border:1px solid #4a4a4a;box-shadow:0 3px 10px rgba(0,0,0,.45),0 0 0 .5px rgba(0,0,0,.5)"></div>
<div class="mi" style="top:402.4px">Solid Color...</div>
<div class="mi" style="top:419.6px">Gradient...</div>
<div class="mi" style="top:436.8px">Pattern...</div>
<div class="abs" style="left:909.5px;top:454px;width:102.5px;height:1px;background:#4c4c4c"></div>
<div class="mi" style="top:463.0px">Brightness/Contrast...</div>
<div class="mi" style="top:479.6px">Levels...</div>
<div class="mi" style="top:496.8px">Curves...</div>
<div class="mi" style="top:513.8px">Exposure...</div>
<div class="abs" style="left:909.5px;top:531px;width:102.5px;height:1px;background:#4c4c4c"></div>
<div class="mi" style="top:540.0px">Vibrance...</div>
<div class="mi" style="top:557.0px">Hue/Saturation...</div>
<div class="abs" style="left:904.7px;top:569.6px;width:111.6px;height:19px;background:#2f5fd2;border:2.6px solid #e8692f"></div>
<div class="mi" style="top:574.2px;color:#fff">Color Balance...</div>
<div class="mi" style="top:591.2px">Black &amp; White...</div>
<div class="mi" style="top:608.4px">Photo Filter...</div>
<div class="mi" style="top:625.4px">Channel Mixer...</div>
<svg class="abs" style="left:955.5px;top:645px" width="10" height="8" viewBox="0 0 10 8"><path d="M1.6 2 L5 5.4 L8.4 2" fill="none" stroke="#e8e8e8" stroke-width="1.5"/></svg>
<!-- arrow -->
<div class="abs" style="left:656px;top:578px;width:231px;height:3px;background:#e8692f"></div>
<svg class="abs" style="left:885.6px;top:575.8px" width="9.2" height="7.6" viewBox="0 0 10 8.4" preserveAspectRatio="none"><path d="M0 .2 L9.6 4.2 L0 8.2 Z" fill="#e8692f"/></svg>
<!-- callout -->
<div class="abs" style="left:540px;top:552.3px;width:110px;height:99.7px;background:#454545;border:2.8px solid #e8692f"></div>
<div class="abs" style="left:643.5px;top:555px;width:3.8px;height:94.2px;background:#555"></div>
<svg class="abs" style="left:571px;top:577.5px" width="46" height="46" viewBox="0 0 46 46"><circle cx="23" cy="22.7" r="20" fill="#454545" stroke="#cfcfcf" stroke-width="3.2"/><path d="M37.6 9.4 A19.6 19.6 0 0 1 8.4 37 Z" fill="#dcdcdc"/></svg>
<svg class="abs" style="left:617px;top:629px" width="16" height="10" viewBox="0 0 16 10"><path d="M1.2 1.2 H14.6 L7.9 8.6 Z" fill="#fff" stroke="#fff" stroke-width=".8" stroke-linejoin="round"/></svg>

</body>
</html>
